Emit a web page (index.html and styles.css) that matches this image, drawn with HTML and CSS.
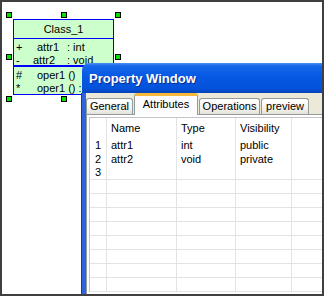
FILE: index.html
```html
<!DOCTYPE html>
<html lang="en">
<head>
  <meta charset="UTF-8">
  <title>Class diagram</title>
  <link rel="stylesheet" href="styles.css">
</head>
<body>
<div class="screen">

  <div class="node">
    <div class="node-name">Class_1</div>
    <div class="node-attrs">
      <div class="member"><span>+</span><span class="ind">attr1</span><span>: int</span></div>
      <div class="member"><span>-</span><span>attr2</span><span>: void</span></div>
    </div>
    <div class="node-ops">
      <div class="member"><span>#</span><span class="ind wide">oper1 ()</span></div>
      <div class="member"><span>*</span><span class="ind wide">oper1 () :</span></div>
    </div>
  </div>

  <span class="handle h-l h-t"></span>
  <span class="handle h-c h-t"></span>
  <span class="handle h-r h-t"></span>
  <span class="handle h-l h-m"></span>
  <span class="handle h-r h-m"></span>
  <span class="handle h-l h-b"></span>
  <span class="handle h-c h-b"></span>
  <span class="handle h-r h-b"></span>

  <div class="win">
    <div class="win-title">Property Window</div>
    <div class="win-body">
      <div class="tabs">
        <div class="tab t-general">General</div>
        <div class="tab t-attrs on">Attributes</div>
        <div class="tab t-ops">Operations</div>
        <div class="tab t-prev">preview</div>
      </div>
      <div class="panel">
        <div class="grid">
          <div class="row head"><span></span><span>Name</span><span>Type</span><span>Visibility</span><span></span></div>
          <div class="row"><span class="num">1</span><span>attr1</span><span>int</span><span>public</span><span></span></div>
          <div class="row"><span class="num">2</span><span>attr2</span><span>void</span><span>private</span><span></span></div>
          <div class="row line"><span class="num">3</span><span></span><span></span><span></span><span></span></div>
          <div class="row line"><span></span><span></span><span></span><span></span><span></span></div>
          <div class="row line"><span></span><span></span><span></span><span></span><span></span></div>
          <div class="row line"><span></span><span></span><span></span><span></span><span></span></div>
          <div class="row line"><span></span><span></span><span></span><span></span><span></span></div>
          <div class="row line"><span></span><span></span><span></span><span></span><span></span></div>
          <div class="row line"><span></span><span></span><span></span><span></span><span></span></div>
          <div class="row line"><span></span><span></span><span></span><span></span><span></span></div>
          <div class="row line"><span></span><span></span><span></span><span></span><span></span></div>
        </div>
      </div>
    </div>
  </div>

</div>
</body>
</html>
```

FILE: styles.css
```css
body {margin:0;}

.screen {
  position:relative;
  width:324px;height:296px;
  box-sizing:border-box;
  border:2px solid #404040;
  background:#fff;
  overflow:hidden;
  font-family:"Liberation Sans", Arial, sans-serif;
  font-size:11px;
  color:#000;
}

/* class node */
.node {
  position:absolute;left:11px;top:17px;
  width:101px;height:76px;
  box-sizing:border-box;
  border:1px solid #0000ff;
  background:#ccffcc;
  overflow:hidden;
}
.node-name {height:18px;line-height:19px;text-align:center;border-bottom:1px solid #0000ff;}
.node-attrs {height:28px;box-sizing:border-box;padding-top:2px;border-bottom:2px solid #0000ff;}
.node-ops {padding-top:2px;}
.member {display:grid;grid-template-columns:17px 34px auto;height:13px;line-height:13px;padding-left:2px;white-space:nowrap;}
.member .ind {padding-left:4px;}
.member .wide {grid-column:2 / 4;}

.handle {
  position:absolute;width:6px;height:6px;
  box-sizing:border-box;border:1px solid #000;
  background:#00e000;
}
.h-l {left:4px;} .h-c {left:59px;} .h-r {left:113px;}
.h-t {top:10px;} .h-m {top:52px;} .h-b {top:94px;}

/* property window */
.win {position:absolute;left:80px;top:61px;width:260px;height:250px;}

.win-title {
  height:30px;line-height:31px;
  padding-left:7px;
  border-radius:7px 7px 0 0;
  background:linear-gradient(#4a90f6 0, #1467e8 3px, #0758e4 45%, #0452dc 85%, #0744b6 100%);
  color:#fff;
  font-weight:bold;font-size:13px;
  text-shadow:1px 1px 0 #0a2f8c;
}

.win-body {
  height:220px;
  background:#ece9d8;
  border-left:4px solid #2e64dc;
  box-shadow:-1px 0 0 #1a3a94;
}

.tabs {display:flex;align-items:flex-end;gap:1px;height:21px;}
.tab {
  height:16px;box-sizing:border-box;
  border:1px solid #919b9c;border-bottom:0;
  border-radius:3px 3px 0 0;
  background:linear-gradient(#fff, #f4f3ee 60%, #e3e2da);
  text-align:center;line-height:15px;
}
.tab.on {
  position:relative;
  height:22px;margin-bottom:-1px;
  border-top:3px solid #f7b83a;
  background:#fcfcfe;
  line-height:17px;
}
.t-general {width:47px;}
.t-attrs {width:64px;}
.t-ops {width:61px;}
.t-prev {width:48px;}

.panel {
  height:200px;
  background:#fff;
  border-top:1px solid #919b9c;
  border-left:1px solid #919b9c;
  padding:2px 0 0 2px;
}

.grid {border-top:1px solid #c4c4c4;border-left:1px solid #c4c4c4;}
.row {display:grid;grid-template-columns:17px 70px 59px 56px 1fr;height:14px;box-sizing:border-box;line-height:14px;}
.row span {border-right:1px solid #e3e3e3;padding-left:4px;white-space:nowrap;}
.row span:last-child {border-right:0;}
.row .num {padding-left:0;text-align:center;}
.row.head {height:20px;line-height:20px;}
.row.line {border-bottom:1px solid #e3e3e3;line-height:13px;}
```
